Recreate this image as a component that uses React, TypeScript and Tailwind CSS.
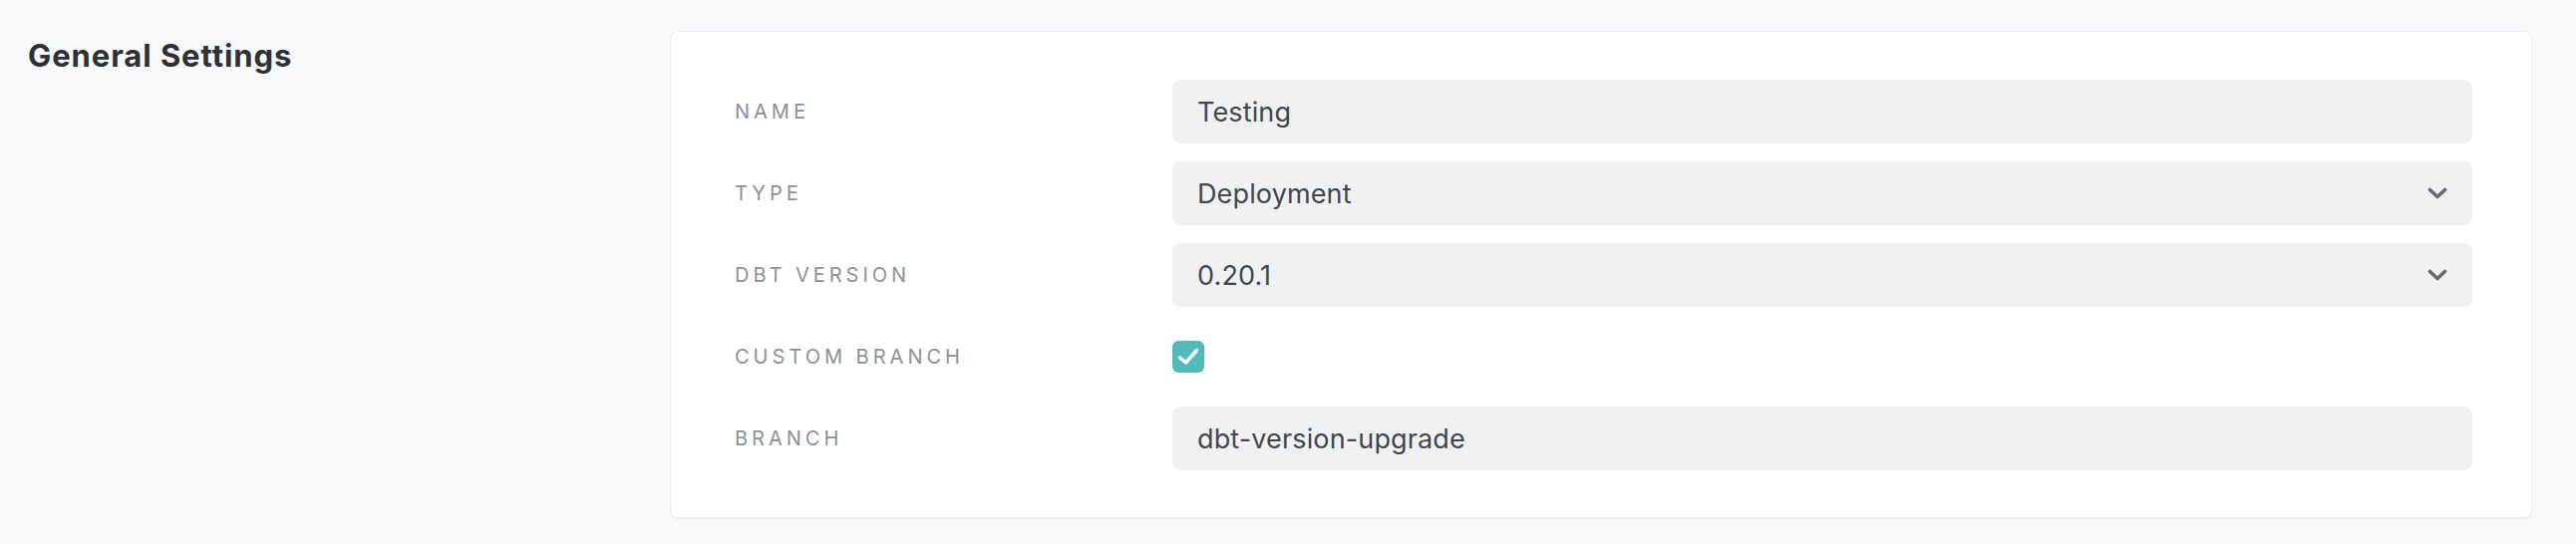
import React from 'react';

const Chevron: React.FC = () => (
  <svg width="20" height="14" viewBox="0 0 20 14" fill="none" className="shrink-0">
    <path d="M2.5 3.5 L10 10.5 L17.5 3.5" stroke="#67696e" strokeWidth="3.6" strokeLinecap="round" strokeLinejoin="round" />
  </svg>
);

const Field: React.FC<{ value: string; select?: boolean }> = ({ value, select }) => (
  <div className="h-[64px] rounded-lg bg-[#f0f1f3] flex items-center justify-between pl-[25px] pr-[25px] pt-[3px]">
    <span className="text-[27px] text-[#43464b] tracking-[0.005em]">{value}</span>
    {select && (
      <span className="-mt-[3px]">
        <Chevron />
      </span>
    )}
  </div>
);

const Label: React.FC<{ children: React.ReactNode }> = ({ children }) => (
  <div className="h-[64px] flex items-center text-[20px] tracking-[0.2em] text-[#8a9198] uppercase">{children}</div>
);

export default function App() {
  return (
    <div className="min-h-[546px] w-full bg-[#f8f9fb] flex pl-[28px] pr-[44px] pt-[31px] font-['Inter',sans-serif]">
      <div className="w-[644px] shrink-0">
        <h2 className="mt-[6px] text-[31px] leading-[38px] font-bold tracking-[0.03em] text-[#2e3034]">General Settings</h2>
      </div>
      <div className="flex-1 self-start bg-white rounded-lg border border-[#eceef1] shadow-[0_1px_2px_rgba(0,0,0,0.06)] pt-[48px] pb-[47px] pl-[64px] pr-[59px]">
        <div className="grid grid-cols-[439px_1fr] gap-y-[18px]">
          <Label>Name</Label>
          <Field value="Testing" />

          <Label>Type</Label>
          <Field value="Deployment" select />

          <Label>dbt Version</Label>
          <Field value="0.20.1" select />

          <Label>Custom Branch</Label>
          <div className="h-[64px] flex items-center">
            <div className="w-[32px] h-[32px] rounded-[6px] bg-[#53b9ba]">
              <svg width="32" height="32" viewBox="0 0 32 32" fill="none">
                <path d="M7.5 17 L13.5 22 L24.5 9.5" stroke="white" strokeWidth="3.5" strokeLinecap="round" strokeLinejoin="round" />
              </svg>
            </div>
          </div>

          <Label>Branch</Label>
          <Field value="dbt-version-upgrade" />
        </div>
      </div>
    </div>
  );
}
